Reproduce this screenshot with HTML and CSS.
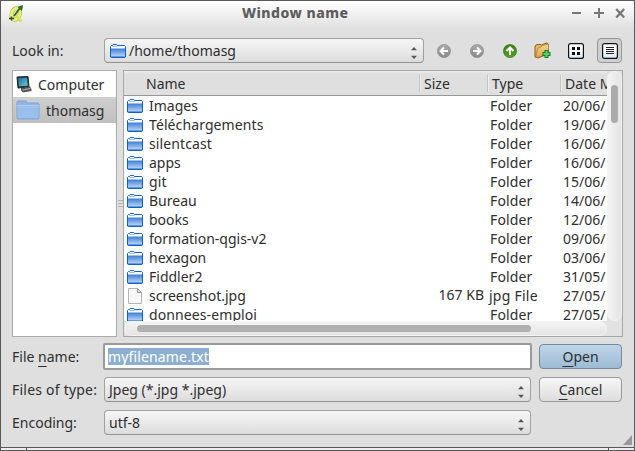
FILE: index.html
```html
<!DOCTYPE html>
<html lang="en">
<head>
<meta charset="utf-8">
<title>Window name</title>
<link rel="stylesheet" href="styles.css">
</head>
<body>
<svg width="0" height="0" class="defs">
  <defs>
    <linearGradient id="blue" x1="0" y1="0" x2="0" y2="1"><stop offset="0" stop-color="#3b7dd6"/><stop offset="1" stop-color="#c3daf6"/></linearGradient>
    <linearGradient id="gray" x1="0" y1="0" x2="0" y2="1"><stop offset="0" stop-color="#aaa"/><stop offset="1" stop-color="#8b8b8b"/></linearGradient>
    <linearGradient id="green" x1="0" y1="0" x2="0" y2="1"><stop offset="0" stop-color="#367f12"/><stop offset="1" stop-color="#55a323"/></linearGradient>
    <linearGradient id="screen" x1="0" y1="0" x2="1" y2="1"><stop offset="0" stop-color="#176b9d"/><stop offset="1" stop-color="#74ccdc"/></linearGradient>
    <linearGradient id="tan" x1="0" y1="0" x2="0" y2="1"><stop offset="0" stop-color="#f8d997"/><stop offset="1" stop-color="#dda345"/></linearGradient>
    <linearGradient id="page" x1="0" y1="0" x2="0" y2="1"><stop offset=".5" stop-color="#fff"/><stop offset="1" stop-color="#cfe6f7"/></linearGradient>
    <symbol id="folder" viewBox="0 0 16 14">
      <path d="M.5 12.500V2.500l1-1h1l.7-1h3.600l.7 1h7l1 1v10l-1 1h-13z" fill="#fff" stroke="#0b62cb"/>
      <path d="M2.500 2.500h5" stroke="#9abce8"/>
      <path d="M1 4.500h14v8.500H1z" fill="url(#blue)"/>
      <path d="M.5 4v9h15V4" fill="none" stroke="#0b62cb"/>
    </symbol>
    <symbol id="arrows" viewBox="0 0 6 12"><path d="M0 3.300L3 0l3 3.300zM0 8.700h6L3 12z" fill="#555"/></symbol>
  </defs>
</svg>
<div class="window">
  <header class="titlebar">
    <svg class="logo" width="15" height="18" viewBox="0 0 15 18">
      <ellipse cx="6.700" cy="9" rx="4" ry="6" transform="rotate(18 6.700 9)" fill="none" stroke="#a5ad58" stroke-width="4"/>
      <ellipse cx="6.700" cy="9" rx="4" ry="6" transform="rotate(18 6.700 9)" fill="none" stroke="#eeee72" stroke-width="3"/>
      <path d="M7 10l4 6 2-1" fill="none" stroke="#dce24d" stroke-width="2.500"/>
      <path d="M5 11L11 3" stroke="#246d24" stroke-width="1.800"/><path d="M8.500 2L14 0l-1 6z" fill="#236b25"/>
      <path d="M0 13.500h5M2.500 11.500v4" stroke="#27551c" stroke-width="1.300"/>
    </svg>
    <h1 class="title">Window name</h1>
    <svg class="controls" width="54" height="12" viewBox="0 0 54 12" stroke="#777" stroke-width="2"><path d="M1 6h9M23 6h10M28 1v10"/><path d="M45.200 2l8 8.500M53.200 2l-8 8.500" stroke-width="2.300"/></svg>
  </header>

  <div class="toolbar">
    <span class="label">Look in:</span>
    <div class="combo path"><svg width="16" height="14"><use href="#folder"/></svg><span>/home/thomasg</span><svg class="arrows" width="6" height="12"><use href="#arrows"/></svg></div>
    <div class="tools">
      <svg width="14" height="14" viewBox="0 0 14 14"><circle cx="7" cy="7" r="6.600" fill="url(#gray)" stroke="#898989" stroke-width=".6"/><path d="M11 7H4M7 3.500L3.500 7 7 10.500" fill="none" stroke="#fff" stroke-width="2"/></svg>
      <svg width="14" height="14" viewBox="0 0 14 14"><circle cx="7" cy="7" r="6.600" fill="url(#gray)" stroke="#898989" stroke-width=".6"/><path d="M3 7h7M7 3.500L10.500 7 7 10.500" fill="none" stroke="#fff" stroke-width="2"/></svg>
      <svg width="14" height="14" viewBox="0 0 14 14"><circle cx="7" cy="7" r="6.600" fill="url(#green)" stroke="#34750f" stroke-width=".6"/><path d="M7 11V4M3.500 7L7 3.500 10.500 7" fill="none" stroke="#fff" stroke-width="2"/></svg>
      <svg width="17" height="17" viewBox="0 0 17 17"><path d="M1 15V4l2-1.500h3L7.500 3 13 .8 14 3v9L4 16z" fill="#e8b965" stroke="#8b5d21"/><path d="M1.500 15L4 6l3-1 1.500-1.500 6-1.500v9L4 15.500z" fill="url(#tan)" stroke="#a8732e" stroke-width=".7"/><path d="M12.500 8v8M8.500 12h8" stroke="#157d2a" stroke-width="4"/><path d="M12.500 9v6M9.500 12h6" stroke="#52d269" stroke-width="2"/></svg>
      <svg width="16" height="16" viewBox="0 0 16 16"><rect x=".6" y=".6" width="14.800" height="14.800" rx="2" fill="url(#page)" stroke="#111" stroke-width="1.200"/><path d="M4 4h3v3H4zM9 4h3v3H9zM4 9h3v3H4zM9 9h3v3H9z" fill="#111"/></svg>
      <span class="pressed"><svg width="16" height="16" viewBox="0 0 16 16"><rect x=".6" y=".6" width="14.800" height="14.800" rx="2" fill="url(#page)" stroke="#111" stroke-width="1.200"/><path d="M4 4.500h8M4 6.500h8M4 8.500h8M4 10.500h8" stroke="#222"/></svg></span>
    </div>
  </div>

  <main class="panes">
    <nav class="places">
      <div class="place"><svg width="16" height="17" viewBox="0 0 16 17"><path d="M1 1l11-.5 1 10.500-11 1z" fill="#263439" stroke="#222"/><path d="M2 2l9-.3.700 8L3 10.300z" fill="url(#screen)"/><path d="M5 12l9-1.500 1.500 2.500v2L7 16.500l-2-2z" fill="#555"/><path d="M6 13.500l8-1.500 1 1-8 1.500z" fill="#aaa"/></svg><span>Computer</span></div>
      <div class="place selected"><svg width="24" height="20" viewBox="0 0 24 20"><path d="M1 18V2.500L2 1h8l1 2h11l1 1v14l-1 1H2z" fill="#8fb5e6" stroke="#79a3d9"/><path d="M1.500 5.500h21V18h-21z" fill="#9bbfec"/><path d="M1 5.500h22" stroke="#b3cdec"/></svg><span>thomasg</span></div>
    </nav>
    <div class="splitter"><i></i><i></i><i></i></div>
    <section class="files">
      <div class="view">
        <div class="head"><span class="name">Name</span><span>Size</span><span>Type</span><span>Date M</span></div>
        <div class="row"><svg width="16" height="14"><use href="#folder"/></svg><span>Images</span><span class="kind">Folder</span><span class="date">20/06/</span></div>
        <div class="row"><svg width="16" height="14"><use href="#folder"/></svg><span class="wide">Téléchargements</span><span class="kind">Folder</span><span class="date">19/06/</span></div>
        <div class="row"><svg width="16" height="14"><use href="#folder"/></svg><span class="wide">silentcast</span><span class="kind">Folder</span><span class="date">16/06/</span></div>
        <div class="row"><svg width="16" height="14"><use href="#folder"/></svg><span>apps</span><span class="kind">Folder</span><span class="date">16/06/</span></div>
        <div class="row"><svg width="16" height="14"><use href="#folder"/></svg><span class="wide">git</span><span class="kind">Folder</span><span class="date">15/06/</span></div>
        <div class="row"><svg width="16" height="14"><use href="#folder"/></svg><span>Bureau</span><span class="kind">Folder</span><span class="date">14/06/</span></div>
        <div class="row"><svg width="16" height="14"><use href="#folder"/></svg><span>books</span><span class="kind">Folder</span><span class="date">12/06/</span></div>
        <div class="row"><svg width="16" height="14"><use href="#folder"/></svg><span>formation-qgis-v2</span><span class="kind">Folder</span><span class="date">09/06/</span></div>
        <div class="row"><svg width="16" height="14"><use href="#folder"/></svg><span>hexagon</span><span class="kind">Folder</span><span class="date">03/06/</span></div>
        <div class="row"><svg width="16" height="14"><use href="#folder"/></svg><span>Fiddler2</span><span class="kind">Folder</span><span class="date">31/05/</span></div>
        <div class="row"><svg width="16" height="16" viewBox="0 0 16 16"><path d="M1.500.5h9l4 4v11h-13z" fill="#f8f8f8" stroke="#b5b5b5"/><path d="M10.500.5v4h4z" fill="#ddd" stroke="#999"/></svg><span>screenshot.jpg</span><span class="size">167 KB</span><span class="kind jpg">jpg File</span><span class="date">27/05/</span></div>
        <div class="row"><svg width="16" height="14"><use href="#folder"/></svg><span class="wide">donnees-emploi</span><span class="kind">Folder</span><span class="date">27/05/</span></div>
      </div>
      <div class="vbar"><div class="vthumb"></div></div>
      <div class="hbar"><div class="hthumb"></div></div>
    </section>
  </main>

  <div class="form">
    <span class="label">File <u>n</u>ame:</span>
    <div class="input"><span>myfilename.txt</span></div>
    <div class="button open"><span><u>O</u>pen</span></div>
    <span class="label l-files">Files of type:</span>
    <div class="combo"><span>Jpeg (*.jpg *.jpeg)</span><svg class="arrows" width="6" height="12"><use href="#arrows"/></svg></div>
    <div class="button"><span><u>C</u>ancel</span></div>
    <span class="label">Encoding:</span>
    <div class="combo"><span>utf-8</span><svg class="arrows" width="6" height="12"><use href="#arrows"/></svg></div>
  </div>
  <svg class="grip" width="9" height="10" viewBox="0 0 9 10"><path d="M9 0v10H0z" fill="#999"/></svg>
  <footer class="frame"></footer>
</div>
</body>
</html>
```
FILE: styles.css
```css
* { box-sizing: border-box; }
body { margin: 0; font: 14px/19px "Noto Sans", sans-serif; color: #2e2e2e; overflow: hidden; }
.defs { position: absolute; }
svg { display: block; flex: none; }
span { white-space: pre; }
u { text-underline-offset: 4px; text-decoration-thickness: 1px; text-decoration-skip-ink: none; }

.window { position: relative; width: 635px; height: 451px; border: 1px solid #5b585b; background: #dfdfdf linear-gradient(#fff, #f4f4f4 10px, #dfdfdf 28px) no-repeat 0 0 / 100% 28px; }
.titlebar { display: flex; height: 37px; padding: 4px 10px 0 8px; }
.title { width: 109px; margin: -2px 0 0 218px; font-size: 14px; line-height: 19px; font-weight: 800; color: #5c5c5c; white-space: nowrap; letter-spacing: .5px; }
.controls { margin: 2px -1px 0 auto; }

.toolbar { display: flex; height: 25px; padding: 0 11px; align-items: center; }
.toolbar .label { width: 92px; }
.combo { display: flex; align-items: center; height: 25px; padding: 0 7px 0 4px; border: 1px solid #a0a0a0; border-bottom-color: #929292; border-radius: 4px; background: linear-gradient(#f6f6f6, #e7e7e7 60%, #dcdcdc); }
.path { width: 320px; padding-left: 5px; }
.path span { margin-left: 3px; }
.arrows { margin: 5px -1px 0 auto; }
.tools { flex: 1; display: flex; align-items: center; padding-left: 13px; }
.tools svg + svg { margin-left: 19px; }
.tools svg:nth-child(4) { margin-left: 17px; }
.tools svg:nth-child(5) { margin-left: 17px; }
.pressed { margin-left: 13px; width: 25px; height: 25px; display: grid; place-items: center; border: 1px solid #979797; border-radius: 4px; background: #cfcfcf; }

.panes { display: flex; height: 267px; margin: 7px 11px 0; }
.places { width: 105px; border: 1px solid #aaa; background: #fff; }
.place { display: flex; align-items: center; height: 26px; padding-left: 3px; gap: 6px; }
.place span { margin-top: 1px; }
.selected { background: linear-gradient(#cfcfcf, #c0c0c0); }
.splitter { width: 6px; padding-top: 130px; }
.splitter i { display: block; width: 5px; height: 1px; margin: 0 0 2px 1px; background: #b3b3b3; }
.files { width: 500px; display: grid; grid-template: 250px 15px / 483px 15px; border: 1px solid #a7a7a7; background: #e2e2e2; }
.view { overflow: hidden; background: #fff; }
.head { display: grid; grid-template-columns: 295px 68px 73px 47px; height: 25px; line-height: 25px; border-bottom: 1px solid #969696; background: #dfdfdf linear-gradient(#eee, #dfdfdf 3px); }
.head span { padding-left: 5px; background: linear-gradient(90deg, #c3c3c3 1px, #efefef 1px) no-repeat 0 4px / 2px 17px; overflow: hidden; }
.head .name { padding-left: 22px; background: none; }
.row { display: grid; grid-template-columns: 16px 6px 272px 63px 6px 73px 47px; height: 19px; padding-left: 3px; align-items: center; }
.row svg { grid-column: 1; grid-row: 1; }
.row span { grid-column: 3; grid-row: 1; height: 19px; }
.row .wide { letter-spacing: .1px; }
.row .size { grid-column: 4; text-align: right; margin-top: -2px; }
.row .kind { grid-column: 6; letter-spacing: .15px; }
.row .jpg { letter-spacing: .25px; margin-left: -1px; }
.row .date { grid-column: 7; }
.vbar { padding: 13px 4px 0; border: 1px solid #f4f4f4; border-radius: 8px; background: linear-gradient(90deg, #f4f4f4, #e4e4e4); }
.vthumb { width: 7px; height: 38px; margin-left: -1px; border-radius: 4px; background: #ababab; }
.hbar { padding: 3px 0 0 12px; border: 1px solid #f4f4f4; border-radius: 8px; background: linear-gradient(#f4f4f4, #e4e4e4); }
.hthumb { width: 394px; height: 7px; border-radius: 4px; background: #b0b0b0; }

.form { display: grid; grid-template-columns: 92px 427px 83px; grid-template-rows: 25px 25px 25px; row-gap: 8px; margin: 7px 11px 0; align-items: center; }
.form .button { margin-left: 8px; width: 83px; }
.form .l-files { letter-spacing: .22px; }
.input { height: 27px; margin: -1px -1px; padding: 2px 3px; border: 2px solid #9b9b9b; background: #fff; border-radius: 2px; }
.input span { display: inline-block; height: 17px; line-height: 17px; letter-spacing: .15px; background: #8cafd0; color: #fff; }
.button { height: 25px; display: grid; place-items: center; border: 1px solid #999; border-radius: 4px; background: linear-gradient(#f6f6f6, #e7e7e7 60%, #dcdcdc); }
.open { border-color: #75899b; background: linear-gradient(#bfd4e7, #9dbbd5); }
.grip { position: absolute; right: 2px; bottom: 5px; }
.frame { position: absolute; left: 0; right: 0; bottom: 0; height: 3px; border-top: 1px solid #5b585b; background: linear-gradient(#5b585b, #5b585b) 25px 0 / 1px 2px no-repeat, linear-gradient(#5b585b, #5b585b) 607px 0 / 1px 2px no-repeat, #eee; }
```
